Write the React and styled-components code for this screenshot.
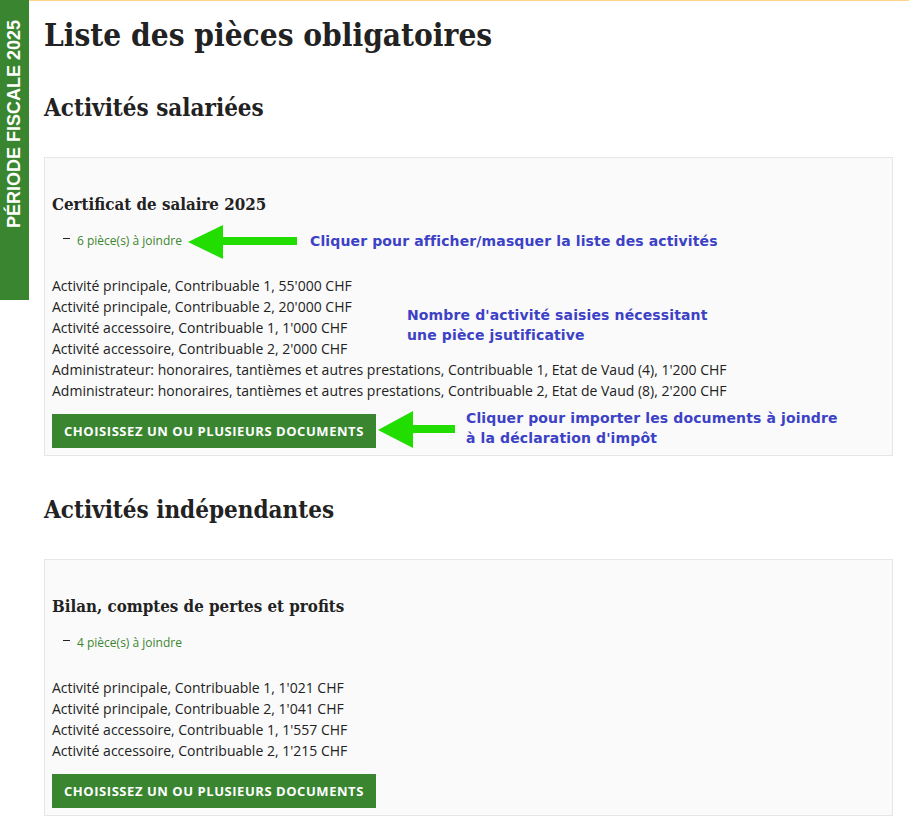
import React from 'react';
import styled, { createGlobalStyle } from 'styled-components';

const GlobalStyle = createGlobalStyle`
  body {
    margin: 0;
    background: #fff;
    font-family: "Open Sans", "Liberation Sans", sans-serif;
    color: #222;
  }
`;

const Page = styled.div`
  position: relative;
  display: flex;
  align-items: flex-start;
  min-height: 831px;
`;

const PeriodTab = styled.div`
  flex-shrink: 0;
  width: 29px;
  height: 300px;
  background: #3a8530;
  display: flex;
  justify-content: center;
  align-items: flex-start;
`;

const PeriodLabel = styled.span`
  margin-top: 20px;
  writing-mode: vertical-rl;
  transform: rotate(180deg);
  white-space: nowrap;
  color: #fff;
  font: bold 18px "Liberation Sans", Arial, sans-serif;
`;

const Main = styled.main`
  flex: 1;
  border-top: 1px solid #fcd48a;
  padding: 0 16px 0 15px;
`;

const Title = styled.h1`
  margin: 14px 0 0;
  font-family: "DejaVu Serif", serif;
  font-stretch: condensed;
  font-size: 31.3px;
  line-height: 40px;
  font-weight: bold;
  color: #222;
`;

const Section = styled.section`
  display: flex;
  flex-direction: column;
  gap: 33px;
  margin-top: 37px;

  & + & {
    margin-top: 38px;
  }
`;

const SectionTitle = styled.h2`
  margin: 0;
  font-family: "DejaVu Serif", serif;
  font-stretch: condensed;
  font-size: 24px;
  line-height: 32px;
  font-weight: bold;
  color: #222;
`;

const Card = styled.div`
  display: flex;
  flex-direction: column;
  align-items: flex-start;
  background: #fafafa;
  border: 1px solid #e6e6e6;
  padding: 34px 7px 7px;
`;

const CardTitle = styled.h3`
  margin: 0;
  font-family: "DejaVu Serif", serif;
  font-stretch: condensed;
  font-size: 16.8px;
  line-height: 24px;
  font-weight: bold;
  color: #222;
`;

const Toggle = styled.div`
  margin-top: 15px;
  padding-left: 11px;
  display: flex;
  align-items: center;
  height: 18px;
  font-size: 12px;
  color: #3a8530;
`;

const Dash = styled.span`
  width: 7px;
  height: 1px;
  margin: 0 7px 3px 0;
  background: #222;
`;

const Activities = styled.ul`
  list-style: none;
  margin: 26px 0 0;
  padding: 0;
  font-size: 14px;
  line-height: 21px;
  color: #222;
`;

const UploadButton = styled.button`
  display: block;
  margin-top: 13px;
  height: 34px;
  padding: 0 12px;
  border: none;
  background: #3a8530;
  color: #fff;
  font-family: "Open Sans", sans-serif;
  font-size: 13px;
  font-weight: bold;
  text-transform: uppercase;
  letter-spacing: 0.55px;
  cursor: pointer;
`;

const Note = styled.div`
  position: absolute;
  left: ${p => p.x}px;
  top: ${p => p.y}px;
  color: #3c41c6;
  font: bold 14px/20px "DejaVu Sans", Verdana, sans-serif;
  letter-spacing: 0.13px;
  white-space: nowrap;
`;

const Arrow = styled.svg`
  position: absolute;
  left: ${p => p.x}px;
  top: ${p => p.y}px;
`;

const sections = [
  {
    title: 'Activités salariées',
    doc: 'Certificat de salaire 2025',
    items: [
      "Activité principale, Contribuable 1, 55'000 CHF",
      "Activité principale, Contribuable 2, 20'000 CHF",
      "Activité accessoire, Contribuable 1, 1'000 CHF",
      "Activité accessoire, Contribuable 2, 2'000 CHF",
      "Administrateur: honoraires, tantièmes et autres prestations, Contribuable 1, Etat de Vaud (4), 1'200 CHF",
      "Administrateur: honoraires, tantièmes et autres prestations, Contribuable 2, Etat de Vaud (8), 2'200 CHF",
    ],
  },
  {
    title: 'Activités indépendantes',
    doc: 'Bilan, comptes de pertes et profits',
    items: [
      "Activité principale, Contribuable 1, 1'021 CHF",
      "Activité principale, Contribuable 2, 1'041 CHF",
      "Activité accessoire, Contribuable 1, 1'557 CHF",
      "Activité accessoire, Contribuable 2, 1'215 CHF",
    ],
  },
];

const App = () => (
  <Page>
    <GlobalStyle />
    <PeriodTab>
      <PeriodLabel>PÉRIODE FISCALE 2025</PeriodLabel>
    </PeriodTab>
    <Main>
      <Title>Liste des pièces obligatoires</Title>
      {sections.map(section => (
        <Section key={section.title}>
          <SectionTitle>{section.title}</SectionTitle>
          <Card>
            <CardTitle>{section.doc}</CardTitle>
            <Toggle>
              <Dash />
              {section.items.length} pièce(s) à joindre
            </Toggle>
            <Activities>
              {section.items.map(item => (
                <li key={item}>{item}</li>
              ))}
            </Activities>
            <UploadButton>Choisissez un ou plusieurs documents</UploadButton>
          </Card>
        </Section>
      ))}
    </Main>

    <Arrow x={188} y={225} width="110" height="35" viewBox="0 0 110 35">
      <polygon points="0,17 35,0 35,12 109,12 109,20 35,20 35,34" fill="#22dd00" />
    </Arrow>
    <Note x={310} y={231}>Cliquer pour afficher/masquer la liste des activités</Note>
    <Note x={407} y={305}>
      Nombre d'activité saisies nécessitant
      <br />
      une pièce jsutificative
    </Note>
    <Arrow x={378} y={411} width="78" height="37" viewBox="0 0 78 37">
      <polygon points="0,19 35,0 35,14 77,14 77,22 35,22 35,37" fill="#22dd00" />
    </Arrow>
    <Note x={466} y={408}>
      Cliquer pour importer les documents à joindre
      <br />
      à la déclaration d'impôt
    </Note>
  </Page>
);

export default App;
